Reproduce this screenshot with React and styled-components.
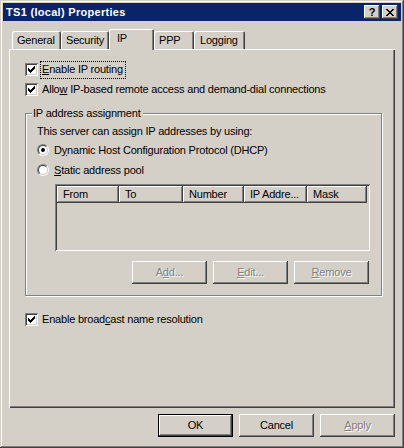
import React from 'react';
import styled, { createGlobalStyle, css } from 'styled-components';

const Global = createGlobalStyle`
  html, body { margin: 0; padding: 0; background: #d4d0c8; }
  body {
    font-family: "Liberation Sans", Arial, sans-serif;
    font-size: 11px;
    letter-spacing: -0.2px;
    color: #000;
  }
  * { box-sizing: border-box; }
`;

const raised = css`
  box-shadow: inset -1px -1px #404040, inset 1px 1px #fff, inset -2px -2px #808080, inset 2px 2px #d4d0c8;
`;
const sunken = css`
  box-shadow: inset 1px 1px #808080, inset -1px -1px #fff, inset 2px 2px #404040, inset -2px -2px #d4d0c8;
`;

const Window = styled.div`
  width: 404px;
  height: 448px;
  background: #d4d0c8;
  padding: 3px;
  display: flex;
  flex-direction: column;
  box-shadow: inset -1px -1px #404040, inset 1px 1px #d4d0c8, inset -2px -2px #808080, inset 2px 2px #fff;
`;

const TitleBar = styled.div`
  height: 18px;
  background: #0a246a;
  color: #fff;
  font-weight: bold;
  display: flex;
  align-items: center;
  justify-content: space-between;
  padding: 0 3px 0 3px;
`;

const TitleText = styled.span`
  font-size: 11px;
  letter-spacing: 0.3px;
`;

const CaptionButtons = styled.div`
  display: flex;
  gap: 2px;
`;

const CaptionButton = styled.div`
  width: 16px;
  height: 14px;
  background: #d4d0c8;
  ${raised};
  display: flex;
  align-items: center;
  justify-content: center;
  color: #000;
  font-weight: bold;
  font-size: 11px;
  line-height: 14px;
  letter-spacing: 0;
`;

const Body = styled.div`
  flex: 1;
  display: flex;
  flex-direction: column;
  padding: 0 6px;
`;

const TabStrip = styled.div`
  display: flex;
  align-items: flex-end;
  height: 20px;
  margin-top: 8px;
  padding-left: 3px;
  position: relative;
  z-index: 1;
`;

const Tab = styled.div`
  width: ${p => p.$w}px;
  height: ${p => (p.$active ? 21 : 18)}px;
  margin-bottom: ${p => (p.$active ? -1 : 0)}px;
  background: #d4d0c8;
  border-top-left-radius: 2px;
  border-top-right-radius: 2px;
  box-shadow: inset 1px 1px #fff, inset -1px 0 #404040, inset -2px 0 #808080;
  padding: 3px 0 0 ${p => p.$pl}px;
  line-height: 13px;
  white-space: nowrap;
`;

const Panel = styled.div`
  height: 359px;
  background: #d4d0c8;
  box-shadow: inset 1px 1px #fff, inset -1px -1px #404040, inset -2px -2px #808080;
  display: flex;
  flex-direction: column;
  padding: 12px 13px 0 16px;
`;

const CheckRow = styled.div`
  height: 17px;
  display: flex;
  align-items: center;
  gap: 4px;
  margin-top: ${p => p.$mt || 0}px;
`;

const Box = styled.div`
  width: 13px;
  height: 13px;
  background: #fff;
  ${sunken};
  display: flex;
  align-items: center;
  justify-content: center;
  flex: none;
`;

const Label = styled.span`
  line-height: 13px;
  padding: 1px 2px 2px 1px;
  margin-left: -1px;
  outline: ${p => (p.$focus ? '1px dotted #000' : 'none')};
  outline-offset: 0;
  white-space: nowrap;
`;

const Group = styled.div`
  position: relative;
  margin-top: ${p => p.$mt}px;
  height: 183px;
  border: 1px solid #808080;
  box-shadow: inset 1px 1px #fff, 1px 1px #fff;
  display: flex;
  flex-direction: column;
  padding: 11px 11px 0 11px;
`;

const Legend = styled.span`
  position: absolute;
  top: -7px;
  left: 6px;
  padding: 0 2px 0 1px;
  background: #d4d0c8;
  line-height: 13px;
`;

const Text = styled.div`
  line-height: 13px;
  height: 13px;
`;

const RadioRow = styled.div`
  height: 17px;
  display: flex;
  align-items: center;
  gap: 5px;
  margin-top: 3px;
`;

const RadioOuter = styled.div`
  width: 12px;
  height: 12px;
  border-radius: 50%;
  border: 1px solid;
  border-color: #808080 #fff #fff #808080;
  flex: none;
`;

const RadioInner = styled.div`
  width: 10px;
  height: 10px;
  border-radius: 50%;
  border: 1px solid;
  border-color: #404040 #d4d0c8 #d4d0c8 #404040;
  background: #fff;
  display: flex;
  align-items: center;
  justify-content: center;
`;

const Dot = styled.div`
  width: 4px;
  height: 4px;
  border-radius: 50%;
  background: #000;
`;

const ListView = styled.div`
  margin-top: 6px;
  margin-left: 18px;
  height: 67px;
  padding: 2px;
  ${sunken};
  background: #d4d0c8;
`;

const Header = styled.div`
  display: flex;
  height: 17px;
`;

const HeaderCell = styled.div`
  width: ${p => p.$w}px;
  flex: none;
  height: 17px;
  ${raised};
  padding: 2px 0 0 6px;
  line-height: 13px;
  white-space: nowrap;
`;

const ButtonRow = styled.div`
  display: flex;
  justify-content: flex-end;
  gap: 6px;
  margin-top: ${p => p.$mt}px;
  padding-right: ${p => p.$pr || 0}px;
`;

const Button = styled.div`
  width: 75px;
  height: 23px;
  background: #d4d0c8;
  display: flex;
  align-items: center;
  justify-content: center;
  line-height: 13px;
  color: ${p => (p.$disabled ? '#808080' : '#000')};
  text-shadow: ${p => (p.$disabled ? '1px 1px #fff' : 'none')};
  box-shadow: ${p =>
    p.$default
      ? 'inset 0 0 0 1px #000, inset -2px -2px #404040, inset 2px 2px #fff, inset -3px -3px #808080'
      : 'inset -1px -1px #404040, inset 1px 1px #fff, inset -2px -2px #808080, inset 2px 2px #d4d0c8'};
`;

const U = styled.span`
  text-decoration: underline;
  text-underline-offset: 1px;
`;

function Check() {
  return (
    <svg width="7" height="7" viewBox="0 0 7 7" shapeRendering="crispEdges">
      <rect x="6" y="0" width="1" height="1" fill="#000" />
      <rect x="5" y="1" width="2" height="1" fill="#000" />
      <rect x="0" y="2" width="1" height="1" fill="#000" />
      <rect x="4" y="2" width="3" height="1" fill="#000" />
      <rect x="0" y="3" width="2" height="1" fill="#000" />
      <rect x="3" y="3" width="3" height="1" fill="#000" />
      <rect x="0" y="4" width="5" height="1" fill="#000" />
      <rect x="1" y="5" width="3" height="1" fill="#000" />
      <rect x="2" y="6" width="1" height="1" fill="#000" />
    </svg>
  );
}

function CloseGlyph() {
  return (
    <svg width="8" height="7" viewBox="0 0 8 7" shapeRendering="crispEdges">
      {[0, 1, 2, 3, 4, 5, 6].map(i => (
        <React.Fragment key={i}>
          <rect x={i} y={i} width="2" height="1" fill="#000" />
          <rect x={6 - i} y={i} width="2" height="1" fill="#000" />
        </React.Fragment>
      ))}
    </svg>
  );
}

function CheckBox({ checked }) {
  return <Box>{checked && <Check />}</Box>;
}

function Radio({ checked }) {
  return (
    <RadioOuter>
      <RadioInner>{checked && <Dot />}</RadioInner>
    </RadioOuter>
  );
}

const tabs = [
  { name: 'General', w: 49, pl: 5 },
  { name: 'Security', w: 48, pl: 5 },
  { name: 'IP', w: 45, pl: 8, active: true },
  { name: 'PPP', w: 40, pl: 5 },
  { name: 'Logging', w: 51, pl: 6 },
];

const cols = [
  { name: 'From', w: 62 },
  { name: 'To', w: 64 },
  { name: 'Number', w: 61 },
  { name: 'IP Addre...', w: 63 },
  { name: 'Mask', w: 60 },
];

export default function App() {
  return (
    <>
      <Global />
      <Window>
        <TitleBar>
          <TitleText>TS1 (local) Properties</TitleText>
          <CaptionButtons>
            <CaptionButton>?</CaptionButton>
            <CaptionButton><CloseGlyph /></CaptionButton>
          </CaptionButtons>
        </TitleBar>
        <Body>
          <TabStrip>
            {tabs.map(t => (
              <Tab key={t.name} $w={t.w} $pl={t.pl} $active={t.active}>{t.name}</Tab>
            ))}
          </TabStrip>
          <Panel>
            <CheckRow>
              <CheckBox checked />
              <Label $focus><U>E</U>nable IP routing</Label>
            </CheckRow>
            <CheckRow $mt={3}>
              <CheckBox checked />
              <Label>Allo<U>w</U> IP-based remote access and demand-dial connections</Label>
            </CheckRow>
            <Group $mt={15}>
              <Legend>IP address assignment</Legend>
              <Text>This server can assign IP addresses by using:</Text>
              <RadioRow>
                <Radio checked />
                <span>D<U>y</U>namic Host Configuration Protocol (DHCP)</span>
              </RadioRow>
              <RadioRow>
                <Radio />
                <span><U>S</U>tatic address pool</span>
              </RadioRow>
              <ListView>
                <Header>
                  {cols.map(c => (
                    <HeaderCell key={c.name} $w={c.w}>{c.name}</HeaderCell>
                  ))}
                </Header>
              </ListView>
              <ButtonRow $mt={10} $pr={1}>
                <Button $disabled>A<U>d</U>d...</Button>
                <Button $disabled><U>E</U>dit...</Button>
                <Button $disabled><U>R</U>emove</Button>
              </ButtonRow>
            </Group>
            <CheckRow $mt={15}>
              <CheckBox checked />
              <Label>Enable broad<U>c</U>ast name resolution</Label>
            </CheckRow>
          </Panel>
          <ButtonRow $mt={6}>
            <Button $default>OK</Button>
            <Button>Cancel</Button>
            <Button $disabled><U>A</U>pply</Button>
          </ButtonRow>
        </Body>
      </Window>
    </>
  );
}
